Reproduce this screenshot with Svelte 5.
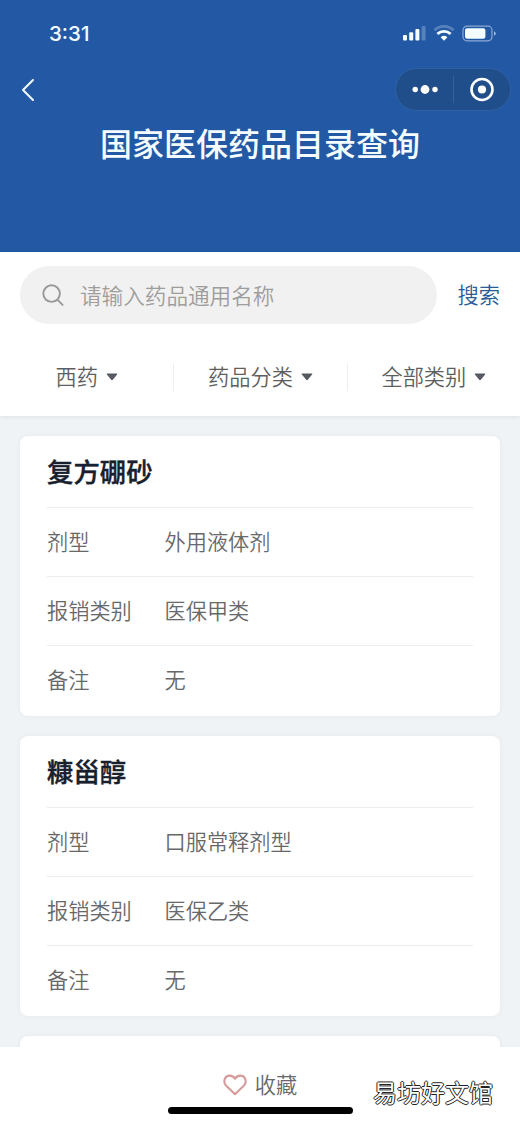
<script>
    let keyword = '';

    const filters = ['西药', '药品分类', '全部类别'];

    const drugs = [
        { name: '复方硼砂', form: '外用液体剂', type: '医保甲类', note: '无' },
        { name: '糠甾醇', form: '口服常释剂型', type: '医保乙类', note: '无' },
    ];
</script>

<div class="page">
    <header class="header">
        <div class="status-bar">
            <span class="time">3:31</span>
            <svg class="status-icons" width="94" height="18" viewBox="0 0 94 18">
                <!-- Signal -->
                <g fill="#f4fcff">
                    <rect x="0" y="10" width="4" height="5.5" rx="1" />
                    <rect x="6.2" y="7.3" width="4" height="8.2" rx="1" />
                    <rect x="12.4" y="4" width="4" height="11.5" rx="1" />
                    <rect x="18.6" y="1" width="4" height="14.5" rx="1" opacity="0.25" />
                </g>
                <!-- Wifi -->
                <g fill="none" stroke="#f4fcff" stroke-width="2.8">
                    <path d="M31.4 5.2a14 14 0 0 1 19.2 0" opacity="0.25" />
                    <path d="M34.4 9a9.6 9.6 0 0 1 13.2 0" />
                </g>
                <path d="M37.6 12.2a5.2 5.2 0 0 1 6.8 0L41 15.8z" fill="#f4fcff" />
                <!-- Battery -->
                <rect x="60" y="1.2" width="29" height="14.6" rx="4" fill="none" stroke="#f4fcff" stroke-opacity="0.5" stroke-width="1.2" />
                <rect x="62" y="3.2" width="20.4" height="10.6" rx="2.2" fill="#f4fcff" />
                <path d="M91 6.3q1.8 .7 1.8 2.2t-1.8 2.2z" fill="#f4fcff" opacity="0.6" />
            </svg>
        </div>

        <div class="nav-bar">
            <button class="back" aria-label="返回">
                <svg width="14" height="24" viewBox="0 0 14 24">
                    <path d="M12 2 2 12l10 10" fill="none" stroke="#f4fcff" stroke-width="2" stroke-linecap="round" stroke-linejoin="round" />
                </svg>
            </button>
            <div class="capsule">
                <svg width="114" height="41" viewBox="0 0 114 41">
                    <g fill="#fff">
                        <circle cx="19.2" cy="20.5" r="2.7" />
                        <circle cx="29" cy="20.5" r="4.4" />
                        <circle cx="39" cy="20.5" r="2.7" />
                        <circle cx="86" cy="20.5" r="4.1" />
                    </g>
                    <path d="M57.5 7v27" stroke="#fff" stroke-opacity="0.1" />
                    <circle cx="86" cy="20.5" r="10.5" fill="none" stroke="#fff" stroke-width="2.6" />
                </svg>
            </div>
        </div>

        <h1 class="title">国家医保药品目录查询</h1>
    </header>

    <section class="search-panel">
        <div class="search-row">
            <label class="search-box">
                <svg width="24" height="24" viewBox="0 0 24 24" fill="none" stroke="#999" stroke-width="1.9" stroke-linecap="round">
                    <circle cx="9.6" cy="10.6" r="8.3" />
                    <path d="m15.6 16.8 5 5" />
                </svg>
                <input type="text" placeholder="请输入药品通用名称" bind:value={keyword} />
            </label>
            <button class="search-btn">搜索</button>
        </div>

        <div class="filters">
            {#each filters as filter (filter)}
                <button class="filter">
                    <span>{filter}</span>
                    <svg width="12" height="8" viewBox="0 0 12 8">
                        <path d="M1.3 .5h9.4q1 .2.4 1.1L6.8 6.8q-.8.8-1.6 0L.9 1.6Q.3.7 1.3.5z" fill="#555a60" />
                    </svg>
                </button>
            {/each}
        </div>
    </section>

    <main class="list">
        {#each drugs as drug (drug.name)}
            <article class="card">
                <h2 class="card-title">{drug.name}</h2>
                <dl class="card-row"><dt>剂型</dt><dd>{drug.form}</dd></dl>
                <dl class="card-row"><dt>报销类别</dt><dd>{drug.type}</dd></dl>
                <dl class="card-row"><dt>备注</dt><dd>{drug.note}</dd></dl>
            </article>
        {/each}
        <article class="card card-next"></article>
    </main>

    <footer class="footer">
        <button class="favorite">
            <svg width="24" height="22" viewBox="0 0 24 22">
                <path d="M12 20.2 3.2 11.8C-.6 7.6 2 1.6 6.8 1.6c2.4 0 4.2 1.4 5.2 3.1 1-1.7 2.8-3.1 5.2-3.1 4.8 0 7.4 6 3.6 10.2z" fill="none" stroke="#d69a9a" stroke-width="2.1" stroke-linejoin="round" />
            </svg>
            <span>收藏</span>
        </button>
        <div class="home-indicator"></div>
        <span class="watermark">易坊好文馆</span>
    </footer>
</div>

<style>
    :global(body) {
        margin: 0;
        background: #eff3f6;
    }

    .page {
        display: flex;
        flex-direction: column;
        width: 520px;
        height: 1125px;
        overflow: hidden;
        background: #eff3f6;
        color: #67686a;
        font-family: "Noto Sans CJK SC", sans-serif;
        font-size: 21.2px;
        font-weight: 350;
    }

    button {
        padding: 0;
        border: 0;
        background: none;
        color: inherit;
        font: inherit;
    }

    svg {
        display: block;
        flex: none;
    }

    .header {
        flex: none;
        height: 252px;
        background: #2359a4;
        color: #f4fcff;
    }

    .status-bar {
        display: flex;
        align-items: center;
        justify-content: space-between;
        height: 68px;
        box-sizing: border-box;
        padding: 0 23px 0 49px;
    }

    .time {
        padding-bottom: 1px;
        font-family: Inter, sans-serif;
        font-size: 20.5px;
        font-weight: 500;
    }

    .nav-bar {
        display: flex;
        align-items: center;
        justify-content: space-between;
        height: 43px;
        padding: 0 9px 0 21px;
    }

    .capsule {
        box-sizing: border-box;
        border: 1px solid #2f62a4;
        border-radius: 22px;
        background: #204e8b;
    }

    .title {
        margin: 7px 0 0;
        font-size: 32px;
        font-weight: 500;
        line-height: 48px;
        text-align: center;
    }

    .search-panel {
        flex: none;
        height: 164px;
        background: #fff;
        box-shadow: 0 1px 4px rgba(0, 0, 0, 0.07);
    }

    .search-row {
        display: flex;
        align-items: center;
        gap: 21px;
        padding: 14px 20px 0;
    }

    .search-box {
        display: flex;
        align-items: center;
        gap: 14px;
        width: 417px;
        height: 58px;
        box-sizing: border-box;
        padding: 0 22px;
        border-radius: 29px;
        background: #f1f1f1;
    }

    .search-box input {
        flex: 1;
        min-width: 0;
        padding: 0 0 2px;
        border: 0;
        outline: 0;
        background: none;
        font: inherit;
        font-size: 21.6px;
    }

    .search-box input::placeholder {
        color: #9d9d9d;
    }

    .search-btn {
        padding-bottom: 4px;
        color: #2a5b94;
        white-space: nowrap;
    }

    .filters {
        display: grid;
        grid-template-columns: repeat(3, 1fr);
        align-items: center;
        margin-top: 39px;
    }

    .filter {
        display: flex;
        align-items: center;
        justify-content: center;
        gap: 8px;
        height: 28px;
        color: #5d5e60;
    }

    .filter span {
        padding-bottom: 4px;
    }

    .filter + .filter {
        border-left: 1px solid #efefef;
    }

    .list {
        flex: 1;
        min-height: 0;
        overflow: hidden;
        padding: 20px 20px 0;
    }

    .card {
        height: 280px;
        box-sizing: border-box;
        margin-bottom: 20px;
        padding: 0 27px;
        border-radius: 8px;
        background: #fff;
        box-shadow: 0 0 5px rgba(0, 0, 0, 0.05);
    }

    .card-title {
        height: 71px;
        margin: 0;
        color: #17202c;
        font-size: 26.4px;
        font-weight: 500;
        line-height: 69px;
        -webkit-text-stroke: 0.35px #17202c;
    }

    .card-row {
        display: flex;
        align-items: center;
        height: 69px;
        box-sizing: border-box;
        margin: 0;
        padding-bottom: 4px;
        border-top: 1px solid #ececec;
    }

    .card-row dt {
        width: 117.5px;
    }

    .card-row dd {
        margin: 0;
    }

    .footer {
        position: relative;
        display: flex;
        flex: none;
        flex-direction: column;
        align-items: center;
        height: 78px;
        box-sizing: border-box;
        padding-top: 22px;
        background: #fff;
    }

    .favorite {
        display: flex;
        align-items: center;
        gap: 8px;
        height: 32px;
    }

    .favorite span {
        padding-bottom: 3px;
    }

    .home-indicator {
        width: 185px;
        height: 7px;
        margin-top: 6px;
        border-radius: 4px;
        background: #000;
    }

    .watermark {
        position: absolute;
        right: 27px;
        bottom: 15px;
        color: #fff;
        font-size: 24px;
        font-weight: 400;
        line-height: 36px;
        text-shadow: 1px 0 #222, -1px 0 #222, 0 1px #222, 0 -1px #222;
    }
</style>
